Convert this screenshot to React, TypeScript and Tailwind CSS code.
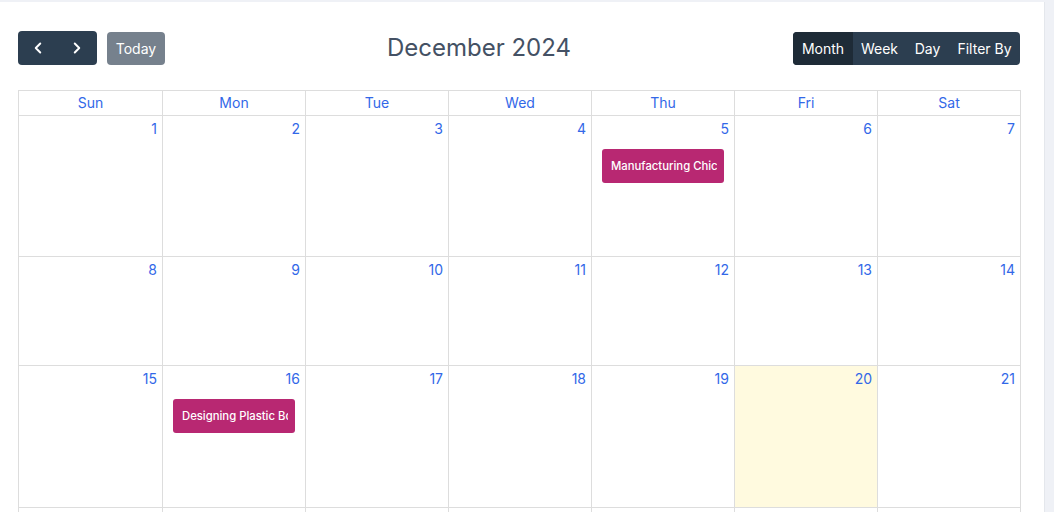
import React from "react";
import { ChevronLeft, ChevronRight } from "lucide-react";

const days = ["Sun", "Mon", "Tue", "Wed", "Thu", "Fri", "Sat"];

type Ev = { day: number; title: string };
const events: Ev[] = [
  { day: 5, title: "Manufacturing Chic Furniture" },
  { day: 16, title: "Designing Plastic Bottles" },
];

const weeks: { nums: number[]; h: string }[] = [
  { nums: [1, 2, 3, 4, 5, 6, 7], h: "h-[141px]" },
  { nums: [8, 9, 10, 11, 12, 13, 14], h: "h-[109px]" },
  { nums: [15, 16, 17, 18, 19, 20, 21], h: "h-[142px]" },
  { nums: [22, 23, 24, 25, 26, 27, 28], h: "h-[120px]" },
];

const cols = "grid grid-cols-[144px_143px_143px_143px_143px_143px_143px]";

export default function App() {
  return (
    <div
      className="w-full h-[512px] overflow-hidden bg-[#eff1f6]"
      style={{ fontFamily: "Inter, 'Noto Sans', sans-serif" }}
    >
      <div className="mt-[2px] w-[1045px] h-[510px] bg-white border-r border-[#e4e7ec] px-[18px] pt-[29px]">
        {/* toolbar */}
        <div className="flex items-center justify-between w-[1003px] mb-[25px]">
          <div className="flex items-center gap-[10px]">
            <div className="flex h-[34px] rounded-[4px] overflow-hidden bg-[#2c3e50]">
              <button className="w-[39px] h-full flex items-center justify-center text-white">
                <ChevronLeft size={18} strokeWidth={2.6} />
              </button>
              <button className="w-[40px] h-full flex items-center justify-center text-white">
                <ChevronRight size={18} strokeWidth={2.6} />
              </button>
            </div>
            <button className="w-[58px] h-[33px] mt-[1px] rounded-[4px] bg-[#76818d] text-white text-[14px] leading-none">
              Today
            </button>
          </div>
          <div className="text-[24px] leading-[30px] text-[#445164] whitespace-nowrap">
            December 2024
          </div>
          <div className="flex h-[33px] mt-[1px] mr-[1px] rounded-[4px] overflow-hidden bg-[#2c3e50] text-white text-[14px]">
            <button className="w-[60px] h-full bg-[#1e2b37]">Month</button>
            <button className="w-[53px] h-full">Week</button>
            <button className="w-[43px] h-full">Day</button>
            <button className="w-[71px] h-full">Filter By</button>
          </div>
        </div>

        {/* grid */}
        <div className="w-[1003px] border-l border-t border-[#dddddd]">
          <div className={cols}>
            {days.map((d) => (
              <div
                key={d}
                className="h-[25px] border-r border-b border-[#dddddd] text-center text-[14px] leading-[23px] text-[#3268e8]"
              >
                {d}
              </div>
            ))}
          </div>
          {weeks.map((w, wi) => (
            <div key={wi} className={cols}>
              {w.nums.map((n) => {
                const ev = events.find((e) => e.day === n);
                return (
                  <div
                    key={n}
                    className={`${w.h} border-r border-b border-[#dddddd] flex flex-col ${
                      n === 20 ? "bg-[#fffadf]" : ""
                    }`}
                  >
                    <div className="text-right pr-[5px] pt-[3px] text-[14px] leading-[20px] text-[#3268e8]">
                      {n}
                    </div>
                    {ev && (
                      <div className="mt-[10px] ml-[10px] mr-[10px] h-[34px] rounded-[3px] bg-[#b82872] text-white text-[11.3px] font-medium flex items-center pl-[9px] pr-[7px] overflow-hidden whitespace-nowrap">
                        <span className="overflow-hidden">{ev.title}</span>
                      </div>
                    )}
                  </div>
                );
              })}
            </div>
          ))}
        </div>
      </div>
    </div>
  );
}
